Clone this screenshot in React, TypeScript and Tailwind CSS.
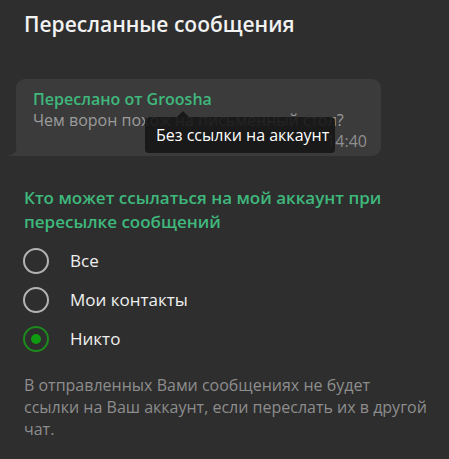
import React from "react";

function Radio({ checked }: { checked?: boolean }) {
  return checked ? (
    <div className="w-[26px] h-[26px] rounded-full border-2 border-[#1c8a1c] flex items-center justify-center shrink-0">
      <div className="w-[10px] h-[10px] rounded-full bg-[#109c10]" />
    </div>
  ) : (
    <div className="w-[26px] h-[26px] rounded-full border-2 border-[#b3b3b3] shrink-0" />
  );
}

export default function App() {
  const options = [
    { label: "Все", checked: false },
    { label: "Мои контакты", checked: false },
    { label: "Никто", checked: true },
  ];
  return (
    <div
      className="w-[449px] h-[459px] bg-[#2e2e2e] overflow-hidden flex flex-col"
      style={{ fontFamily: '"Open Sans", "Noto Sans", sans-serif' }}
    >
      <h1 className="pl-6 pt-[10px] text-[21px] leading-[28px] font-semibold text-[#f2f2f2]">
        Пересланные сообщения
      </h1>

      <div className="mt-[41px] pl-4 pr-[68px]">
        <div className="relative bg-[#3b3b3b] rounded-[9px] rounded-bl-none pl-[17px] pr-[14px] pt-[10px] pb-[4px]">
          <div className="absolute left-[-7px] bottom-0 w-[8px] h-[8px] overflow-hidden">
            <div className="absolute right-0 bottom-0 w-[8px] h-[8px] bg-[#3b3b3b]" />
            <div className="absolute left-[-8px] bottom-[1px] w-[16px] h-[16px] rounded-full bg-[#2e2e2e]" />
          </div>
          <div className="text-[16px] leading-[21px] font-semibold text-[#3fb87c]">
            Переслано от Groosha
          </div>
          <div className="text-[16px] leading-[21px] text-[#9b9b9b]">
            Чем ворон похож на письменный стол?
          </div>
          <div className="text-right text-[16px] leading-[21px] text-[#8f8f8f]">14:40</div>

          <div className="absolute left-[129px] top-[38px] w-[190px] h-[36px] bg-[#161616]/90 rounded-[4px] flex items-center pl-[11px] text-[16px] text-white">
            <div className="absolute left-[32px] top-[-6px] w-0 h-0 border-l-[6px] border-r-[6px] border-b-[6px] border-l-transparent border-r-transparent border-b-[#161616]/90" />
            Без ссылки на аккаунт
          </div>
        </div>
      </div>

      <div className="mt-[30px] pl-6 pr-4 text-[17px] leading-[24px] font-semibold text-[#3fb87c]">
        Кто может ссылаться на мой аккаунт при пересылке сообщений
      </div>

      <div className="mt-[14px] flex flex-col gap-[13px] pl-[23px]">
        {options.map((o) => (
          <div key={o.label} className="flex items-center gap-[21px] h-[26px]">
            <Radio checked={o.checked} />
            <span className="text-[17px] text-[#f0f0f0]">{o.label}</span>
          </div>
        ))}
      </div>

      <p className="mt-[22px] pl-6 w-[430px] text-[16px] leading-[22px] text-[#8d8d8d]">
        В отправленных Вами сообщениях не будет
        <br />
        ссылки на Ваш аккаунт, если переслать их в другой чат.
      </p>
    </div>
  );
}
